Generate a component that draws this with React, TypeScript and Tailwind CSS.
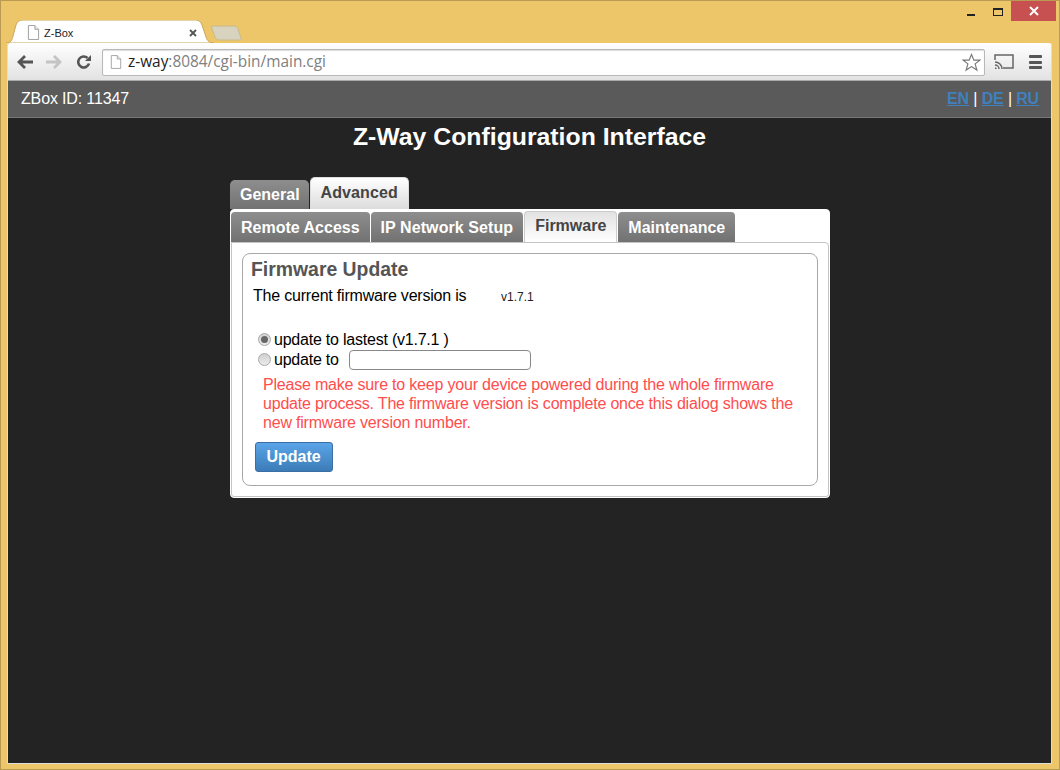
import React from "react";

const sans = "font-['Liberation_Sans',Arial,sans-serif]";

function PageIcon({ className }: { className?: string }) {
  return (
    <svg viewBox="0 0 14 16" className={className} fill="none">
      <path d="M1.5.5h7l4 4v11h-11z" fill="#fff" stroke="#9a9a9a" />
      <path d="M8.5.5v4h4" fill="#eee" stroke="#9a9a9a" />
    </svg>
  );
}

function TopTab({ label, active }: { label: string; active?: boolean }) {
  if (active) {
    return (
      <div className="h-8 px-[10px] pt-[4px] rounded-t-[5px] border border-b-0 border-[#ddd] bg-gradient-to-b from-white to-[#dcdcdc] text-[16px] leading-[22px] font-bold text-[#444] tracking-[0.1px]">
        {label}
      </div>
    );
  }
  return (
    <div className="h-[29px] pl-[10px] pr-[9px] pt-[4px] rounded-t-[5px] bg-gradient-to-b from-[#8e8e8e] to-[#727272] text-[16px] leading-[22px] font-bold text-white">
      {label}
    </div>
  );
}

function SubTab({ label, active, wide }: { label: string; active?: boolean; wide?: boolean }) {
  if (active) {
    return (
      <div className="h-[31px] -mt-px px-[10px] pt-[3px] rounded-t-[4px] border border-b-0 border-[#ccc] bg-gradient-to-b from-[#e2e2e2] to-white text-[16px] leading-[22px] font-bold text-[#444]">
        {label}
      </div>
    );
  }
  return (
    <div className={`h-[30px] px-[10px] pt-[5px] rounded-t-[4px] bg-gradient-to-b from-[#8e8e8e] to-[#727272] text-[16px] leading-[22px] font-bold text-white ${wide ? "tracking-[0.08px]" : ""}`}>
      {label}
    </div>
  );
}

function Radio({ checked }: { checked?: boolean }) {
  return (
    <span className="w-[13px] h-[13px] -mt-px rounded-full border border-[#a8a8a8] bg-gradient-to-b from-[#d0d0d0] to-[#ececec] flex items-center justify-center shrink-0">
      {checked && <span className="w-[7px] h-[7px] rounded-full bg-[#666]" />}
    </span>
  );
}

export default function App() {
  return (
    <div className={`${sans} w-[1060px] h-[770px] bg-[#edc66a] border border-[#b99a52] flex flex-col overflow-hidden`}>
      {/* window title bar */}
      <div className="h-[42px] relative shrink-0">
        <div className="absolute right-[3px] top-0 w-[45px] h-[20px] bg-[#c75050] flex items-center justify-center">
          <svg viewBox="0 0 10 10" className="w-[10px] h-[10px]">
            <path d="M1 1l8 8M9 1l-8 8" stroke="#fff" strokeWidth="2" />
          </svg>
        </div>
        <div className="absolute left-[966px] top-[13px] w-[8px] h-[2px] bg-[#222]" />
        <div className="absolute left-[992px] top-[7px] w-[10px] h-[8px] border border-t-2 border-[#222]" />
        {/* chrome tabs */}
        <svg viewBox="0 0 208 23" className="absolute left-[5px] top-[19px] w-[208px] h-[23px]">
          <path d="M0 23c5 0 6-3 7-7l3-11c1-3 3-5 7-5h173c3 0 5 2 6 5l4 12c1 4 4 6 8 6z" fill="#fff" stroke="#c9a85c" />
        </svg>
        <svg viewBox="0 0 32 16" className="absolute left-[209px] top-[24px] w-[32px] h-[16px]">
          <path d="M1 1h23c2 0 3 1 4 3l3 9c.5 1.500 0 2-1 2H9c-2 0-3-1-4-3z" fill="#d8d3bf" stroke="#c9b98a" />
        </svg>
        <PageIcon className="absolute left-[26px] top-[24px] w-[13px] h-[15px]" />
        <span className="absolute left-[43px] top-[25px] text-[11px] leading-[14px] text-[#222]">Z-Box</span>
        <svg viewBox="0 0 8 8" className="absolute left-[188px] top-[28px] w-[8px] h-[8px]">
          <path d="M1 1l6 6M7 1l-6 6" stroke="#555" strokeWidth="1.800" />
        </svg>
      </div>

      {/* browser viewport */}
      <div className="mx-[6px] flex-1 mb-[5px] flex flex-col border border-t-0 border-[#ddd] min-h-0 w-[1045px]">
        {/* toolbar */}
        <div className="h-[38px] shrink-0 bg-gradient-to-b from-white to-[#e2e2e2] border-b border-[#aaa] flex items-center pl-[9px] pr-[8px] pt-px rounded-t-[2px]">
          <svg viewBox="0 0 16 14" className="w-[16px] h-[14px]">
            <path d="M8 1L2 7l6 6M2 7h14" stroke="#555" strokeWidth="2.800" fill="none" />
          </svg>
          <svg viewBox="0 0 16 14" className="w-[16px] h-[14px] ml-[13px]">
            <path d="M8 1l6 6-6 6M14 7H0" stroke="#c4c4c4" strokeWidth="2.800" fill="none" />
          </svg>
          <svg viewBox="0 0 16 16" className="w-[16px] h-[16px] ml-[14px]">
            <path d="M13 9.500A5.500 5.500 0 1 1 11.500 4" stroke="#555" strokeWidth="2.600" fill="none" />
            <path d="M9 7h6V1z" fill="#555" />
          </svg>
          <div className="ml-[10px] w-[883px] shrink-0 h-[27px] bg-white border border-[#b8b8b8] rounded-[2px] flex items-center pl-[7px] pr-[3px] shadow-[inset_0_1px_1px_#ddd]">
            <PageIcon className="w-[12px] h-[14px] shrink-0" />
            <span className="ml-[6px] text-[15.4px] font-['Open_Sans',sans-serif] text-[#222]">
              z-way<span className="text-[#808080]">:8084/cgi-bin/main.cgi</span>
            </span>
            <svg viewBox="0 0 20 20" className="w-[19px] h-[19px] ml-auto">
              <path d="M10 1.500l2.500 6h6.300l-5 4 1.900 6.500-5.700-3.700L4.300 18l1.900-6.500-5-4h6.300z" fill="#fff" stroke="#777" strokeWidth="1.200" />
            </svg>
          </div>
          <svg viewBox="0 0 20 16" className="w-[20px] h-[16px] ml-[9px] shrink-0">
            <path d="M1 6V1h18v13H9" stroke="#666" strokeWidth="1.500" fill="none" />
            <path d="M1 8a7 7 0 0 1 7 7M1 11a4 4 0 0 1 4 4M1 14a1 1 0 0 1 1 1" stroke="#666" strokeWidth="1.500" fill="none" />
          </svg>
          <div className="ml-[15px] w-[13px] shrink-0 flex flex-col gap-[2.500px]">
            <span className="h-[3px] bg-[#555] rounded-[1px]" />
            <span className="h-[3px] bg-[#555] rounded-[1px]" />
            <span className="h-[3px] bg-[#555] rounded-[1px]" />
          </div>
        </div>

        {/* z-way page */}
        <div className="flex-1 bg-[#232323] min-h-0 flex flex-col">
          <div className="h-[37px] shrink-0 bg-[#5a5a5a] border-b border-[#777] flex items-center justify-between pl-[13px] pr-[12px] text-[16px] text-white tracking-[-0.15px]">
            <span>ZBox ID: 11347</span>
            <span className="font-bold tracking-[-0.15px]">
              <a href="#" className="underline text-[#3f80bd]">EN</a>{" "}
              <span className="font-normal">|</span>{" "}
              <a href="#" className="underline text-[#3f80bd]">DE</a>{" "}
              <span className="font-normal">|</span>{" "}
              <a href="#" className="underline text-[#3f80bd]">RU</a>
            </span>
          </div>

          <h1 className="mt-[5px] text-center text-[24.8px] leading-[28px] font-bold text-white">Z-Way Configuration Interface</h1>

          <div className="ml-[222px] w-[600px] mt-[26px]">
            <div className="flex items-end gap-px">
              <TopTab label="General" />
              <TopTab label="Advanced" active />
            </div>
            <div className="h-[289px] bg-white border border-white rounded-[4px] pt-[2px] flex flex-col">
              <div className="flex gap-px h-[30px] shrink-0">
                <SubTab label="Remote Access" />
                <SubTab label="IP Network Setup" wide />
                <SubTab label="Firmware" active />
                <SubTab label="Maintenance" />
              </div>
              <div className="flex-1 border border-[#c4c4c4] rounded-tr-[4px] rounded-b-[3px] px-[10px] pt-[10px] pb-[10px]">
                <div className="h-[233px] border border-[#a8a8a8] rounded-[8px] pl-[8px] pt-[4px] text-black">
                  <h2 className="text-[19.4px] leading-[22px] font-bold text-[#555]">Firmware Update</h2>
                  <div className="mt-[6px] ml-[2px] flex items-center h-[20px] text-[16px] tracking-[-0.2px]">
                    <span className="w-[248px]">The current firmware version is</span>
                    <span className="pt-px text-[12px] tracking-normal text-[#222]">v1.7.1</span>
                  </div>
                  <div className="mt-[24px] ml-[7px] flex items-center gap-[3px] h-[20px] text-[16px] tracking-[-0.22px]">
                    <Radio checked />
                    <span>update to lastest (v1.7.1 )</span>
                  </div>
                  <div className="ml-[7px] flex items-center gap-[3px] h-[20px] text-[16px] tracking-[-0.22px]">
                    <Radio />
                    <span>update to</span>
                    <input className="ml-[7px] w-[182px] h-[20px] bg-white border border-[#888] rounded-[4px]" />
                  </div>
                  <p className="mt-[5px] ml-[12px] w-[540px] text-[16px] leading-[19px] tracking-[-0.2px] text-[#ff4d4d]">
                    Please make sure to keep your device powered during the whole firmware update process. The firmware version is complete once this dialog shows the new firmware version number.
                  </p>
                  <button className="mt-[10px] ml-[4px] w-[78px] h-[30px] pr-px rounded-[3px] border border-[#3a6ea5] bg-gradient-to-b from-[#5aa5e8] to-[#3c7cb8] text-white text-[16px] font-bold">
                    Update
                  </button>
                </div>
              </div>
            </div>
          </div>
        </div>
      </div>
    </div>
  );
}
